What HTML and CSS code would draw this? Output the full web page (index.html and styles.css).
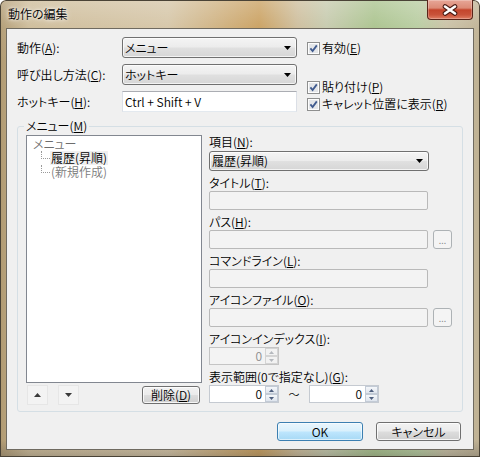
FILE: index.html
```html
<!DOCTYPE html>
<html lang="ja">
<head>
<meta charset="utf-8">
<title>動作の編集</title>
<link rel="stylesheet" href="styles.css">
</head>
<body>
<div class="window">
  <div class="titlebar">
    <span class="title">動作の編集</span>
    <div class="close">
      <svg width="16" height="12" viewBox="0 0 16 12"><path d="M3 2.5 L13 9.5 M13 2.5 L3 9.5" stroke="#4a1a12" stroke-width="4.6" stroke-linecap="round" fill="none"/><path d="M3 2.5 L13 9.5 M13 2.5 L3 9.5" stroke="#ffffff" stroke-width="2.6" stroke-linecap="round" fill="none"/></svg>
    </div>
  </div>
  <div class="client">
    <div class="top">
      <div class="form-grid">
        <span class="lbl-top">動作(<u>A</u>):</span>
        <div class="combo"><span>メニュー</span><svg class="arrow" width="7" height="4" viewBox="0 0 7 4"><path d="M0 0 H7 L3.5 4 Z" fill="#000"/></svg></div>
        <span class="lbl-top">呼び出し方法(<u>C</u>):</span>
        <div class="combo"><span>ホットキー</span><svg class="arrow" width="7" height="4" viewBox="0 0 7 4"><path d="M0 0 H7 L3.5 4 Z" fill="#000"/></svg></div>
        <span class="lbl-top">ホットキー(<u>H</u>):</span>
        <div class="textbox">Ctrl + Shift + V</div>
      </div>
      <div class="checks">
        <div class="check c1"><svg width="13" height="13" viewBox="0 0 13 13"><rect x="0.5" y="0.5" width="12" height="12" fill="#fdfdfd" stroke="#8e8f8f"/><rect x="2" y="2" width="9" height="9" fill="#e4e6e9"/><path d="M3.4 6.4 L5.6 9 L9.8 3.4" stroke="#3f5a8e" stroke-width="1.8" fill="none"/></svg><span>有効(<u>E</u>)</span></div>
        <div class="check c2"><svg width="13" height="13" viewBox="0 0 13 13"><rect x="0.5" y="0.5" width="12" height="12" fill="#fdfdfd" stroke="#8e8f8f"/><rect x="2" y="2" width="9" height="9" fill="#e4e6e9"/><path d="M3.4 6.4 L5.6 9 L9.8 3.4" stroke="#3f5a8e" stroke-width="1.8" fill="none"/></svg><span>貼り付け(<u>P</u>)</span></div>
        <div class="check c3"><svg width="13" height="13" viewBox="0 0 13 13"><rect x="0.5" y="0.5" width="12" height="12" fill="#fdfdfd" stroke="#8e8f8f"/><rect x="2" y="2" width="9" height="9" fill="#e4e6e9"/><path d="M3.4 6.4 L5.6 9 L9.8 3.4" stroke="#3f5a8e" stroke-width="1.8" fill="none"/></svg><span>キャレット位置に表示(<u>R</u>)</span></div>
      </div>
    </div>

    <fieldset class="group">
      <legend>メニュー(<u>M</u>)</legend>
      <div class="group-body">
        <div class="tree-col">
          <div class="tree">
            <div class="tree-root">メニュー</div>
            <div class="tree-child"><span class="branch"></span><span class="item selected">履歴(昇順)</span></div>
            <div class="tree-child"><span class="branch"></span><span class="item muted">(新規作成)</span></div>
          </div>
          <div class="tree-buttons">
            <div class="flat-btn up"><svg width="7" height="4" viewBox="0 0 7 4"><path d="M0 4 H7 L3.5 0 Z" fill="#3a3a3a"/></svg></div>
            <div class="flat-btn down"><svg width="7" height="4" viewBox="0 0 7 4"><path d="M0 0 H7 L3.5 4 Z" fill="#3a3a3a"/></svg></div>
            <button class="btn del">削除(<u>D</u>)</button>
          </div>
        </div>

        <div class="fields">
          <div class="lbl first">項目(<u>N</u>):</div>
          <div class="combo wide"><span>履歴(昇順)</span><svg class="arrow" width="7" height="4" viewBox="0 0 7 4"><path d="M0 0 H7 L3.5 4 Z" fill="#000"/></svg></div>

          <div class="lbl">タイトル(<u>T</u>):</div>
          <div class="row"><div class="tb-off"></div></div>

          <div class="lbl">パス(<u>H</u>):</div>
          <div class="row"><div class="tb-off"></div><div class="dots">...</div></div>

          <div class="lbl">コマンドライン(<u>L</u>):</div>
          <div class="row"><div class="tb-off"></div></div>

          <div class="lbl">アイコンファイル(<u>O</u>):</div>
          <div class="row"><div class="tb-off"></div><div class="dots">...</div></div>

          <div class="lbl">アイコンインデックス(<u>I</u>):</div>
          <div class="row">
            <div class="spin off"><span class="spin-val">0</span><span class="spin-btns"><span class="sb"><svg width="5" height="3" viewBox="0 0 5 3"><path d="M0 3 H5 L2.5 0 Z" fill="#b4b8bd"/></svg></span><span class="sb"><svg width="5" height="3" viewBox="0 0 5 3"><path d="M0 0 H5 L2.5 3 Z" fill="#b4b8bd"/></svg></span></span></div>
          </div>

          <div class="lbl">表示範囲(0で指定なし)(<u>G</u>):</div>
          <div class="row range">
            <div class="spin"><span class="spin-val">0</span><span class="spin-btns"><span class="sb"><svg width="5" height="3" viewBox="0 0 5 3"><path d="M0 3 H5 L2.5 0 Z" fill="#4e5f7e"/></svg></span><span class="sb"><svg width="5" height="3" viewBox="0 0 5 3"><path d="M0 0 H5 L2.5 3 Z" fill="#4e5f7e"/></svg></span></span></div>
            <span class="tilde">〜</span>
            <div class="spin"><span class="spin-val">0</span><span class="spin-btns"><span class="sb"><svg width="5" height="3" viewBox="0 0 5 3"><path d="M0 3 H5 L2.5 0 Z" fill="#4e5f7e"/></svg></span><span class="sb"><svg width="5" height="3" viewBox="0 0 5 3"><path d="M0 0 H5 L2.5 3 Z" fill="#4e5f7e"/></svg></span></span></div>
          </div>
        </div>
      </div>
    </fieldset>

    <div class="dialog-buttons">
      <button class="btn ok">OK</button>
      <button class="btn cancel">キャンセル</button>
    </div>
  </div>
</div>
</body>
</html>
```

FILE: styles.css
```css
* { box-sizing: border-box; }
html, body { margin: 0; padding: 0; }
body {
  width: 480px;
  height: 457px;
  overflow: hidden;
  background: #ffffff;
  font-family: "Noto Sans CJK JP", "Noto Sans", sans-serif;
  font-weight: 350;
  font-size: 12px;
  line-height: 14px;
  color: #000;
  font-feature-settings: "palt";
}
u { text-decoration: underline; text-underline-offset: 1px; }

.window {
  width: 480px;
  height: 457px;
  display: flex;
  flex-direction: column;
  border-radius: 6px 6px 0 0;
  box-shadow: inset 0 0 0 1px #4a4336;
  background:
    linear-gradient(to bottom, rgba(255,255,255,0.25) 0px, rgba(255,255,255,0.05) 28px, rgba(0,0,0,0) 60px, rgba(0,0,0,0) 440px, rgba(70,70,70,0.3) 457px),
    linear-gradient(to right, #b09a72 0%, #cdbb98 6%, #d5c5a6 35%, #c99f5e 54%, #cdbd9b 62%, #c5c9ac 68%, #a9c28c 78%, #b7cc9f 87%, #c9c0a4 93%, #bfb193 100%);
}

.titlebar {
  height: 28px;
  flex: none;
  display: flex;
  justify-content: space-between;
  align-items: flex-start;
  padding: 0 7px 0 8px;
}
.title {
  margin-top: 7px;
  color: #000;
  text-shadow: 0 0 6px rgba(255,255,255,0.9), 0 0 3px rgba(255,255,255,0.9);
}
.close {
  width: 46px;
  height: 20px;
  border: 1px solid #5a2419;
  border-top: none;
  border-radius: 0 0 4px 4px;
  background: linear-gradient(to bottom, #e7a697 0%, #dc8a76 42%, #c4452c 52%, #c9533a 78%, #e07f64 100%);
  box-shadow: inset 0 0 0 1px rgba(255,255,255,0.25);
  display: flex;
  align-items: center;
  justify-content: center;
}

.client {
  margin: 0 6px;
  height: 422px;
  flex: none;
  border: 1px solid #6f6a60;
  background: #f0f0f0;
  padding: 8px 10px 0 10px;
  display: flex;
  flex-direction: column;
}

/* top section */
.top { display: flex; height: 75px; flex: none; }
.form-grid {
  display: grid;
  grid-template-columns: 105px 175px;
  grid-auto-rows: 21px;
  row-gap: 6px;
  align-items: center;
}
.combo {
  height: 21px;
  border: 1px solid #707070;
  border-radius: 3px;
  background: linear-gradient(to bottom, #f4f4f4 0%, #ececec 48%, #e0e0e0 52%, #d6d6d6 100%);
  box-shadow: inset 0 0 0 1px rgba(255,255,255,0.7);
  display: flex;
  align-items: center;
  justify-content: space-between;
  padding: 0 5px 0 2px;
}
.combo .arrow { flex: none; }
.textbox {
  height: 21px;
  background: #fff;
  border: 1px solid #abadb3;
  border-left-color: #dbdfe6;
  border-right-color: #dbdfe6;
  border-bottom-color: #e3e9ef;
  padding: 0 2px;
  display: flex;
  align-items: center;
}
.checks { margin-left: 10px; display: flex; flex-direction: column; }
.check { display: flex; align-items: center; gap: 2px; height: 14px; }
.check svg { flex: none; }
.c1 { margin-top: 4px; }
.c2 { margin-top: 25px; }
.c3 { margin-top: 3px; }

/* group box */
.group {
  margin: 7px 0 0 0;
  padding: 2px 10px 6px 8px;
  border: 1px solid #d5dfe5;
  border-radius: 3px;
  min-width: 0;
  flex: none;
}
.group legend { padding: 0 2px; margin-left: -2px; line-height: 14px; }
.group-body {
  display: grid;
  grid-template-columns: 176px 243px;
  column-gap: 7px;
}

.tree-col { display: flex; flex-direction: column; }
.tree {
  height: 248px;
  background: #fff;
  border: 1px solid #828790;
  padding: 1px 0 0 6px;
}
.tree-root { height: 14px; color: #6d6d6d; }
.tree-child { height: 14px; display: flex; align-items: flex-start; padding-left: 8px; }
.branch {
  width: 9px;
  height: 8px;
  flex: none;
  border-left: 1px dotted #9a9a9a;
  border-bottom: 1px dotted #9a9a9a;
}
.item { padding: 0 1px; height: 14px; }
.item.selected { background: #efefef; }
.item.muted { color: #7b7b7b; }

.tree-buttons {
  margin-top: 2px;
  height: 20px;
  display: flex;
  align-items: center;
}
.flat-btn {
  width: 21px;
  height: 20px;
  border: 1px solid #e6e6e6;
  background: #f3f3f3;
  display: flex;
  align-items: center;
  justify-content: center;
}
.flat-btn.up { margin-left: 1px; }
.flat-btn.down { margin-left: 10px; }

.btn {
  font: inherit;
  line-height: 14px;
  color: #000;
  padding: 0;
  border: 1px solid #707070;
  border-radius: 3px;
  background: linear-gradient(to bottom, #f2f2f2 0%, #ebebeb 48%, #dddddd 52%, #cfcfcf 100%);
  box-shadow: inset 0 0 0 1px rgba(255,255,255,0.8);
  display: flex;
  align-items: center;
  justify-content: center;
}
.btn.del { margin-left: auto; margin-right: 2px; width: 58px; height: 18px; }

/* right fields */
.fields { display: flex; flex-direction: column; }
.lbl { height: 20px; padding-top: 5px; }
.lbl.first { height: 16px; padding-top: 0; }
.combo.wide { width: 220px; height: 20px; }
.row { display: flex; gap: 5px; align-items: center; }
.tb-off {
  width: 219px;
  height: 19px;
  border: 1px solid #b9b9b9;
  border-radius: 2px;
  background: #f3f3f3;
}
.dots {
  width: 19px;
  height: 19px;
  border: 1px solid #adb2b5;
  border-radius: 3px;
  background: #f4f4f4;
  color: #8a8a8a;
  font-size: 9px;
  line-height: 9px;
  display: flex;
  align-items: flex-end;
  justify-content: center;
  padding-bottom: 3px;
}
.spin {
  width: 70px;
  height: 18px;
  border: 1px solid #c5cad1;
  background: #fff;
  display: flex;
}
.spin.off { background: #f3f3f3; border-color: #c4c4c4; }
.spin-val { flex: 1; text-align: right; padding-right: 3px; line-height: 16px; }
.spin.off .spin-val { color: #8c8c8c; }
.spin-btns { width: 13px; display: flex; flex-direction: column; flex: none; }
.sb {
  flex: 1;
  border: 1px solid #c3cbd6;
  background: linear-gradient(to bottom, #f5f7fa, #dfe5ee);
  display: flex;
  align-items: center;
  justify-content: center;
}
.spin.off .sb { border-color: #d4d4d4; background: #f2f2f2; }
.range { gap: 0; }
.tilde { width: 30px; text-align: center; font-size: 11px; }

/* dialog buttons */
.dialog-buttons {
  margin-top: 10px;
  margin-right: 2px;
  display: flex;
  justify-content: flex-end;
  gap: 13px;
}
.btn.ok, .btn.cancel { height: 19px; }
.btn.ok {
  width: 86px;
  border-color: #3c7fb1;
  background: linear-gradient(to bottom, #eaf6fd 0%, #d9f0fc 48%, #bee6fd 52%, #a7d9f5 100%);
  box-shadow: inset 0 0 0 1px rgba(255,255,255,0.6);
}
.btn.cancel { width: 85px; }
```
